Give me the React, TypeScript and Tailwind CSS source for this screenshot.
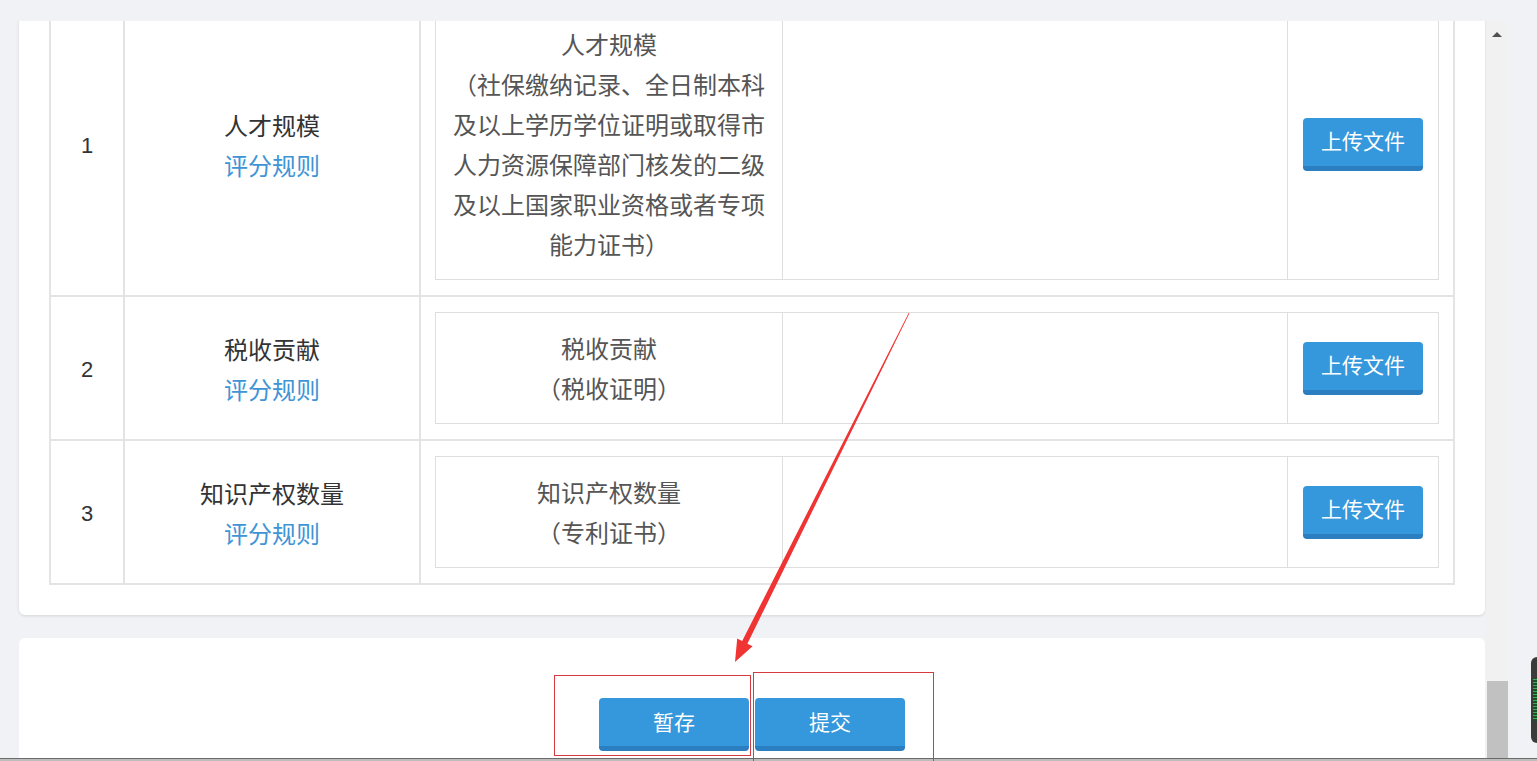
import React from "react";

type Item = {
  no: number;
  name: string;
  title: string;
  note: string;
};

const items: Item[] = [
  {
    no: 1,
    name: "人才规模",
    title: "人才规模",
    note: "（社保缴纳记录、全日制本科及以上学历学位证明或取得市人力资源保障部门核发的二级及以上国家职业资格或者专项能力证书）",
  },
  { no: 2, name: "税收贡献", title: "税收贡献", note: "（税收证明）" },
  { no: 3, name: "知识产权数量", title: "知识产权数量", note: "（专利证书）" },
];

function BlueButton({ label, className }: { label: string; className: string }) {
  return (
    <button
      className={`flex h-[53px] items-center justify-center rounded-[4px] border-b-[5px] border-[#2b7fc0] bg-[#3597dc] text-[21px] leading-none text-white ${className}`}
    >
      {label}
    </button>
  );
}

function Row({ item }: { item: Item }) {
  return (
    <div className="flex border-b-2 border-[#e4e4e4]">
      {/* No. */}
      <div className="flex w-[74px] shrink-0 items-center justify-center border-r-2 border-[#e4e4e4] pt-[2px] text-[22px] text-[#333]">
        {item.no}
      </div>

      {/* Name + rule */}
      <div className="flex w-[296px] shrink-0 flex-col items-center justify-center border-r-2 border-[#e4e4e4] pt-[5px] text-[24px] leading-[40px]">
        <span className="text-[#333]">{item.name}</span>
        <a className="cursor-pointer text-[#3f94d6]">评分规则</a>
      </div>

      {/* Materials */}
      <div className="flex-1 px-[14px] py-[15px]">
        <div className="flex border border-[#dedede]">
          <div className="w-[347px] shrink-0 border-r border-[#dedede] px-[13px] pt-[17px] pb-[13px] text-center text-[24px] leading-[40px] text-[#555]">
            <div>{item.title}</div>
            <div>{item.note}</div>
          </div>
          <div className="w-[505px] shrink-0 border-r border-[#dedede]" />
          <div className="flex flex-1 items-center justify-center">
            <BlueButton label="上传文件" className="w-[120px]" />
          </div>
        </div>
      </div>
    </div>
  );
}

export default function App() {
  return (
    <div
      className="relative h-[761px] w-[1537px] overflow-hidden bg-[#f0f2f5]"
      style={{ fontFamily: '"Liberation Sans", "Noto Sans CJK SC", sans-serif' }}
    >
      <div className="flex h-[758px] pt-[21px]">
        {/* Scroll area */}
        <div className="h-full w-[1486px] overflow-hidden pl-[19px] pr-px">
          <div className="-mt-[60px] rounded-md bg-white px-[30px] pt-[30px] pb-[30px] shadow-[0_1px_3px_rgba(0,0,0,0.12)]">
            <div className="border-x-2 border-t-2 border-[#e4e4e4]">
              {items.map((item) => (
                <Row key={item.no} item={item} />
              ))}
            </div>
          </div>

          <div className="mt-[23px] flex h-[200px] justify-center gap-[6px] rounded-md bg-white pt-[60px]">
            <BlueButton label="暂存" className="w-[150px]" />
            <BlueButton label="提交" className="w-[150px]" />
          </div>
        </div>

        {/* Scrollbar */}
        <div className="flex w-[22px] flex-col bg-[#f1f1f1]">
          <div className="flex h-[27px] items-center justify-center">
            <div className="h-0 w-0 border-x-[5px] border-b-[5px] border-x-transparent border-b-[#505050]" />
          </div>
          <div className="h-[633px]" />
          <div className="ml-px flex-1 bg-[#c1c1c1]" />
        </div>

        <div className="flex-1" />
      </div>

      {/* Bottom edge */}
      <div className="h-[3px] border-t border-[#6b6b6b] bg-[#bdbdbd]" />

      {/* Side widget peeking in */}
      <div className="absolute left-[1531px] top-[657px] flex h-[86px] w-[8px] items-center rounded-l-md bg-[#3b3b3b] pl-[2px]">
        <div className="h-[42px] w-[4px] bg-[repeating-linear-gradient(180deg,#35b04a_0px,#35b04a_1px,#1e4d28_1px,#1e4d28_3px)]" />
      </div>

      {/* Annotation boxes */}
      <div className="absolute left-[554px] top-[675px] h-[81px] w-[197px] border border-[#d6393f]" />
      <div className="absolute left-[753px] top-[672px] h-[100px] w-[181px] border border-[#d6393f]" />

      {/* Annotation arrow */}
      <svg className="absolute left-0 top-0" width="1537" height="761" viewBox="0 0 1537 761">
        <polygon
          points="909.4,313.2 747.4,643.7 752.6,646.3 735,662 737.2,638.5 742.2,640.9 908.8,312.8"
          fill="#f03434"
        />
      </svg>
    </div>
  );
}
